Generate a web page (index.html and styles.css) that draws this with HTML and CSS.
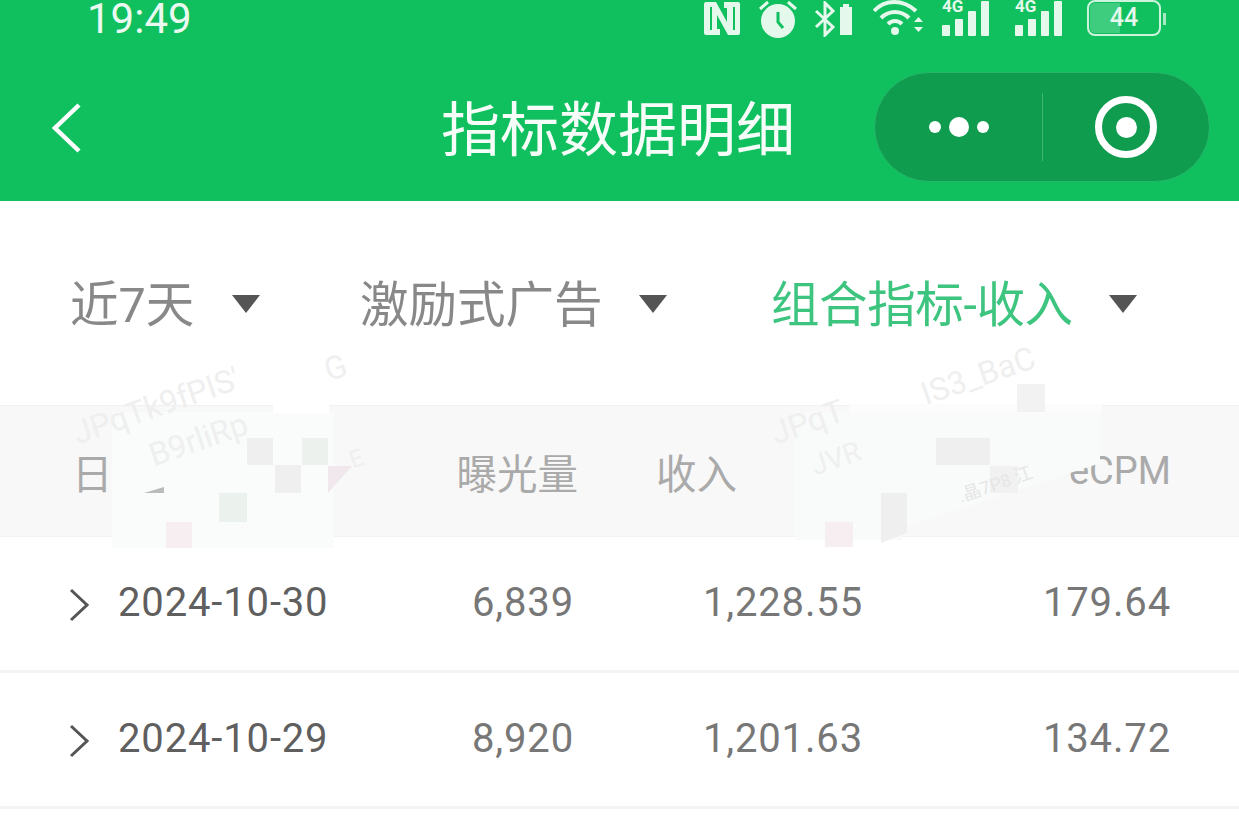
FILE: index.html
```html
<!DOCTYPE html>
<html lang="zh-CN">
<head>
<meta charset="utf-8">
<title>指标数据明细</title>
<link rel="stylesheet" href="styles.css">
</head>
<body>
<div class="page">
  <header class="top">
    <div class="status">
      <span class="time">19:49</span>
      <div class="status-icons">
        <svg class="i-nfc" width="36" height="34" viewBox="0 0 36 34"><path fill="#e4f8ec" fill-rule="evenodd" d="M2 1h32a2 2 0 0 1 2 2v29a2 2 0 0 1-2 2H24L13 14v14h3v6H2a2 2 0 0 1-2-2V3a2 2 0 0 1 2-2zm6 6v21h-1V7zM12 1l11 20V7h-3V1z"/><path fill="#10c05f" d="M29 6h2v23h-2zM6 6h2v23H6z"/></svg>
        <svg class="i-alarm" width="38" height="38" viewBox="0 0 38 38"><circle cx="19" cy="21" r="17" fill="#e4f8ec"/><path d="M19 12v10l5 6" fill="none" stroke="#10c05f" stroke-width="3"/><path d="M1 9 9 2M37 9l-8-7" stroke="#e4f8ec" stroke-width="3"/></svg>
        <svg class="i-bt" width="40" height="36" viewBox="0 0 40 36"><path d="M2 10l17 16-8 8V2l8 8L2 26" fill="none" stroke="#e4f8ec" stroke-width="3"/><path fill="#e4f8ec" d="M26 6h3V3h6v3h3v28H26z"/></svg>
        <svg class="i-wifi" width="50" height="36" viewBox="0 0 50 36"><g fill="none" stroke="#e4f8ec" stroke-width="4"><path d="M1 11C12-1 30-1 43 11"/><path d="M8 18c8-8 20-8 28 0"/><path d="M15 24c4-4 10-4 14 0"/></g><circle cx="22" cy="31" r="4" fill="#e4f8ec"/><path fill="#e4f8ec" d="M41 22h9l-4.500-5zM41 27h9l-4.500 5z"/></svg>
        <div class="signal"><span class="g4">4G</span><i class="b1"></i><i class="b2"></i><i class="b3"></i><i class="b4"></i></div>
        <div class="signal"><span class="g4">4G</span><i class="b1"></i><i class="b2"></i><i class="b3"></i><i class="b4"></i></div>
        <div class="battery"><span class="level"></span><span class="num">44</span><span class="nub"></span></div>
      </div>
    </div>
    <nav class="nav">
      <svg class="back" width="32" height="52" viewBox="0 0 32 52"><path d="M29 3 5 26l24 23" fill="none" stroke="#fff" stroke-width="4.500"/></svg>
      <h1 class="title">指标数据明细</h1>
      <div class="capsule">
        <div class="cap-more"><i class="dot"></i><i class="dot big"></i><i class="dot"></i></div>
        <span class="cap-line"></span>
        <div class="cap-close"><span class="ring"></span></div>
      </div>
    </nav>
  </header>

  <section class="filters">
    <div class="filter f1"><span>近7天</span><i class="tri"></i></div>
    <div class="filter f2"><span>激励式广告</span><i class="tri"></i></div>
    <div class="filter f3 on"><span>组合指标-收入</span><i class="tri"></i></div>
  </section>

  <section class="table">
    <div class="thead">
      <span>日期</span><span>曝光量</span><span>收入</span><span class="ecpm">eCPM</span>
    </div>
    <div class="row">
      <svg class="chev" width="22" height="34" viewBox="0 0 22 34"><path d="M3 2l16 15L3 32" fill="none" stroke="#555" stroke-width="3"/></svg>
      <span class="date">2024-10-30</span><span class="n1">6,839</span><span class="n2">1,228.55</span><span class="n3">179.64</span>
    </div>
    <div class="row">
      <svg class="chev" width="22" height="34" viewBox="0 0 22 34"><path d="M3 2l16 15L3 32" fill="none" stroke="#555" stroke-width="3"/></svg>
      <span class="date">2024-10-29</span><span class="n1">8,920</span><span class="n2">1,201.63</span><span class="n3">134.72</span>
    </div>
  </section>

  <div class="mask" aria-hidden="true">
    <b class="patch p-a"></b><b class="patch p-b"></b><b class="patch p-c"></b><b class="patch p-d"></b>
    <b class="sq s1"></b><b class="sq s2"></b><b class="sq s3"></b><b class="sq s4 green"></b><b class="sq s5 pink"></b><b class="sq s6 pinktri"></b>
    <b class="sq s7"></b><b class="sq s8"></b><b class="sq s9"></b><b class="sq s10"></b><b class="sq s11 pink"></b>
    <b class="shard"></b>
    <span class="wm w1">JPqTk9fPIS'</span><span class="wm w2">B9rliRp</span><span class="wm w3">G</span><span class="wm w4">IS3_BaC</span><span class="wm w5">JPqT</span><span class="wm w6">JVR</span><span class="wm w7">E</span><span class="wm w8">.晶7P8 江</span>
  </div>
</div>
</body>
</html>
```

FILE: styles.css
```css
* { box-sizing: border-box; }
html, body { margin: 0; padding: 0; background: #fff; }
body { font-family: Roboto, "Noto Sans CJK SC", sans-serif; }
.page { position: relative; width: 1239px; height: 827px; overflow: hidden; background: #fff; }

.top { background: #10c05f; height: 201px; color: #fff; }
.status { height: 54px; display: flex; align-items: flex-start; padding: 0 78px 0 87px; justify-content: space-between; }
.time { font-size: 42px; line-height: 38px; color: #eafaf1; }
.status-icons { display: flex; align-items: flex-start; gap: 19px; }
.status-icons svg { display: block; flex: none; }
.i-nfc { margin-top: 1px; }
.i-alarm { margin-right: 0; }
.i-bt { margin-left: -2px; margin-top: 1px; }
.signal { position: relative; width: 54px; height: 36px; flex: none; display: flex; align-items: flex-end; gap: 5px; }
.signal i { display: block; width: 8px; background: #e4f8ec; border-radius: 1px; }
.signal .b1 { height: 11px; }
.signal .b2 { height: 17px; }
.signal .b3 { height: 25px; }
.signal .b4 { height: 35px; }
.g4 { position: absolute; left: 0; top: -3px; font-size: 17px; line-height: 18px; font-weight: 700; color: #e4f8ec; }
.battery { position: relative; width: 74px; height: 36px; margin-left: -1px; border: 2px solid #cdf3dd; border-radius: 8px; flex: none; display: flex; align-items: center; justify-content: center; }
.level { position: absolute; left: 1px; top: 1px; bottom: 1px; width: 30px; background: #3ecd7e; border-radius: 5px 0 0 5px; }
.num { position: relative; font-size: 25px; line-height: 32px; font-weight: 500; color: #e4f8ec; }
.nub { position: absolute; right: -7px; top: 11px; width: 3px; height: 12px; background: #a6e8c3; }

.nav { height: 147px; display: flex; align-items: center; position: relative; padding-left: 50px; }
.back { flex: none; }
.title { position: absolute; left: 441px; top: 42px; margin: 0; font-size: 59px; line-height: 70px; font-weight: 400; color: #f6fdf9; white-space: nowrap; }
.capsule { position: absolute; left: 874px; top: 18px; width: 336px; height: 110px; border-radius: 55px; background: #0f9c4f; border: 1px solid #25b869; display: flex; align-items: center; }
.cap-more { width: 167px; display: flex; align-items: center; justify-content: center; gap: 8px; }
.dot { display: block; width: 12px; height: 12px; border-radius: 50%; background: #fff; }
.dot.big { width: 20px; height: 20px; }
.cap-line { width: 1px; height: 68px; background: #3fb677; }
.cap-close { flex: 1; display: flex; align-items: center; justify-content: center; }
.ring { position: relative; width: 62px; height: 62px; border: 7px solid #fff; border-radius: 50%; display: flex; align-items: center; justify-content: center; }
.ring::after { content: ""; width: 21px; height: 21px; border-radius: 50%; background: #fff; }

.filters { height: 204px; position: relative; }
.filter { position: absolute; top: 76px; display: flex; align-items: center; font-size: 48.500px; line-height: 58px; color: #888; white-space: nowrap; }
.f1 { left: 70px; gap: 38px; }
.f2 { left: 360px; gap: 36px; }
.f3 { left: 771px; gap: 36px; }
.f3 span { letter-spacing: -.4px; }
.on { color: #3dc47e; }
.tri { display: block; width: 0; height: 0; border-left: 14px solid transparent; border-right: 14px solid transparent; border-top: 18px solid #555; margin-top: -4px; }

.thead { height: 132px; background: #f8f8f8; border-top: 1px solid #f1f1f1; border-bottom: 1px solid #f2f2f2; display: grid; grid-template-columns: 382px 124px 159px 1fr; column-gap: 0; align-items: center; padding: 0 68px 0 72px; font-size: 40.500px; color: #aaa; }
.thead span { white-space: nowrap; position: relative; top: 0; }
.thead span:nth-child(3) { justify-self: end; padding-right: 0; }
.thead span:nth-child(2) { justify-self: end; }
.ecpm { justify-self: end; font-size: 38px; }
.row { height: 136px; border-bottom: 3px solid #f3f3f3; display: grid; grid-template-columns: 50px 300px 156px 289px 1fr; align-items: center; padding: 0 68px 3px 68px; font-size: 40px; color: #666; }
.chev { display: block; margin-top: 6px; }
.date { letter-spacing: .85px; color: #5f5f5f; }
.n1, .n2, .n3 { justify-self: end; letter-spacing: .85px; color: #777; }

.mask { position: absolute; inset: 0; pointer-events: none; }
.patch { position: absolute; display: block; }
.p-a { left: 112px; top: 412px; width: 222px; height: 136px; background: #f9fcfa; }
.p-b { left: 273px; top: 383px; width: 56px; height: 30px; background: #fff; }
.p-c { left: 795px; top: 412px; width: 305px; height: 128px; background: #f9fbfa; clip-path: polygon(0 0, 100% 0, 100% 40%, 36% 90%, 35% 100%, 0 100%); }
.p-d { left: 849px; top: 404px; width: 253px; height: 9px; background: #fcfcfc; }
.sq { position: absolute; display: block; background: #efefef; }
.s1 { left: 247px; top: 438px; width: 26px; height: 27px; }
.s2 { left: 302px; top: 438px; width: 26px; height: 27px; background: #ecf1ee; }
.s3 { left: 275px; top: 465px; width: 26px; height: 28px; }
.s4 { left: 219px; top: 493px; width: 28px; height: 29px; }
.s5 { left: 166px; top: 522px; width: 26px; height: 26px; }
.s6 { left: 328px; top: 466px; width: 24px; height: 27px; }
.s7 { left: 936px; top: 438px; width: 54px; height: 27px; }
.s8 { left: 990px; top: 466px; width: 28px; height: 27px; background: #f1f1f1; }
.s9 { left: 1017px; top: 384px; width: 28px; height: 28px; background: #f2f2f2; }
.s10 { left: 881px; top: 493px; width: 26px; height: 50px; clip-path: polygon(0 0, 100% 0, 100% 80%, 0 100%); }
.s11 { left: 825px; top: 522px; width: 28px; height: 25px; }
.green { background: #ebf2ee; }
.pink { background: #f7eef1; }
.pinktri { background: #f0e8ec; clip-path: polygon(0 0, 100% 0, 0 100%); }
.shard { position: absolute; left: 144px; top: 487px; width: 20px; height: 6px; background: #bbb; clip-path: polygon(100% 0, 100% 100%, 0 100%); }
.wm { position: absolute; font-size: 32px; line-height: 36px; color: #efefef; white-space: nowrap; transform: rotate(-19deg); transform-origin: left bottom; }
.w1 { left: 80px; top: 415px; }
.w2 { left: 156px; top: 437px; }
.w3 { left: 331px; top: 352px; }
.w4 { left: 928px; top: 376px; }
.w5 { left: 778px; top: 415px; }
.w6 { left: 818px; top: 448px; font-size: 28px; }
.w7 { left: 356px; top: 442px; font-size: 24px; }
.w8 { left: 965px; top: 478px; font-size: 18px; color: #e6e6e6; }
```
